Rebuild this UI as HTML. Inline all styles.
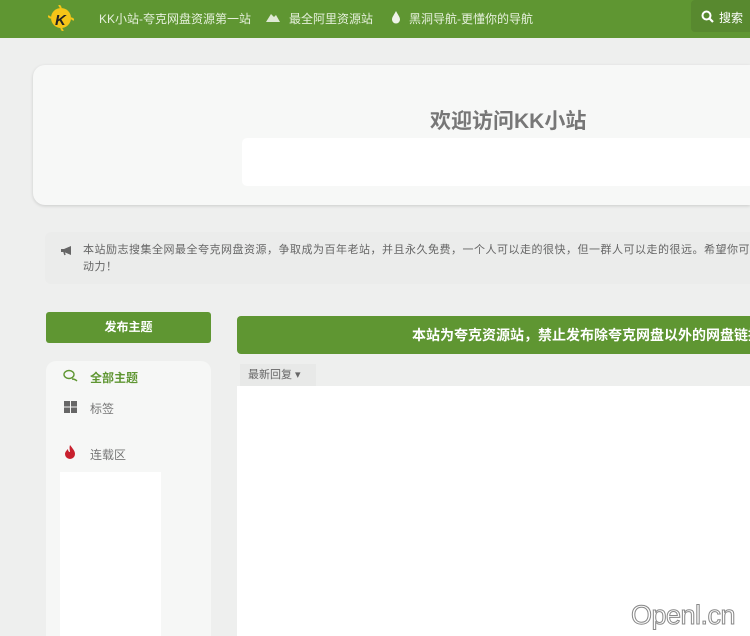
<!DOCTYPE html>
<html><head><meta charset="utf-8">
<style>
*{margin:0;padding:0;box-sizing:border-box}
html,body{width:750px;height:636px;overflow:hidden}
body{background:#eeefee;font-family:"Liberation Sans","Noto Sans CJK SC",sans-serif;position:relative}
.hdr{position:absolute;left:0;top:0;width:750px;height:38px;background:#5f9632;color:#e6f0dc;font-size:12px}
.hdr span{position:absolute;top:10px}
.srch{position:absolute;left:691px;top:0;width:59px;height:32px;background:#58892f;border-radius:4px 0 0 4px}
.card{position:absolute;left:33px;top:65px;width:717px;height:140px;background:#f7f8f7;border-radius:12px 0 0 12px;box-shadow:0 1px 3px rgba(0,0,0,.15)}
.card h1{position:absolute;left:397px;top:40px;font-size:21px;color:#777;font-weight:bold}
.card .in{position:absolute;left:209px;top:73px;width:508px;height:48px;background:#fff;border-radius:5px 0 0 5px}
.note{position:absolute;left:45px;top:232px;width:705px;height:52px;background:#ebeceb;border-radius:6px 0 0 6px;font-size:11px;color:#666;line-height:17px;padding:10px 0 0 38px;white-space:nowrap;overflow:hidden;letter-spacing:0.5px}
.btn{position:absolute;left:46px;top:312px;width:165px;height:31px;background:#5f9632;border-radius:3px;color:#fff;font-size:12px;font-weight:bold;text-align:center;line-height:31px}
.side{position:absolute;left:46px;top:361px;width:165px;height:275px;background:#f6f7f6;border-radius:10px 10px 0 0;overflow:hidden}
.side .it{position:absolute;left:44px;font-size:12px;color:#777}
.side .wh{position:absolute;left:14px;top:111px;width:101px;height:164px;background:#fff}
.ban{position:absolute;left:237px;top:316px;width:513px;height:38px;background:#5f9632;border-radius:4px 0 0 4px;color:#fff;font-size:14px;font-weight:bold;line-height:38px;padding-left:175px;white-space:nowrap;overflow:hidden}
.tab{position:absolute;left:240px;top:364px;width:76px;height:22px;background:#e8e9e8;font-size:11px;color:#666;line-height:22px;padding-left:8px}
.main{position:absolute;left:237px;top:386px;width:513px;height:250px;background:#fff}
.wm{position:absolute;left:631px;top:598px;font-size:27px;line-height:34px;color:#fff;-webkit-text-stroke:1px #888;font-family:"Liberation Sans",sans-serif;letter-spacing:-0.5px}
</style></head><body>
<div class="hdr">
<svg style="position:absolute;left:48px;top:5px" width="26" height="26" viewBox="0 0 26 26"><circle cx="13" cy="13" r="10" fill="#f5c518"/><path d="M3 13L0 11M23 13L26 15M13 3L11 0M13 23L15 26" stroke="#f5c518" stroke-width="2"/><text x="7" y="20" font-size="15" font-weight="bold" font-style="italic" fill="#222" font-family="Liberation Sans">K</text></svg>
<span style="left:99px">KK小站-夸克网盘资源第一站</span>
<svg style="position:absolute;left:265px;top:11px" width="16" height="12"><path d="M1 11L6 3L9 6L11 4L15 11Z" fill="#dfe9d4"/></svg>
<span style="left:289px">最全阿里资源站</span>
<svg style="position:absolute;left:391px;top:10px" width="10" height="14"><path d="M5 1C7 5 9 7 9 9.5A4 4 0 0 1 1 9.5C1 7 3 5 5 1Z" fill="#eef3e8"/></svg>
<span style="left:409px">黑洞导航-更懂你的导航</span>
<div class="srch"><svg style="position:absolute;left:10px;top:10px" width="13" height="13"><circle cx="5.5" cy="5.5" r="4" stroke="#fff" stroke-width="2" fill="none"/><path d="M8.5 8.5L12 12" stroke="#fff" stroke-width="2.2"/></svg><span style="left:28px;top:9px;color:#fff">搜索</span></div>
</div>
<div class="card"><h1>欢迎访问KK小站</h1><div class="in"></div></div>
<div class="note"><svg style="position:absolute;left:15px;top:13px" width="13" height="11"><path d="M1 4H4L11 1V10L4 7H1Z" fill="#666"/><path d="M4 7L5 10" stroke="#666" stroke-width="1.5"/></svg>本站励志搜集全网最全夸克网盘资源，争取成为百年老站，并且永久免费，一个人可以走的很快，但一群人可以走的很远。希望你可以与我们一起<br>动力！</div>
<div class="btn">发布主题</div>
<div class="side">
<svg style="position:absolute;left:17px;top:8px" width="15" height="13"><ellipse cx="6" cy="5.5" rx="5" ry="4" stroke="#5f9632" stroke-width="1.4" fill="none"/><path d="M9 10Q12 10 14 12" stroke="#5f9632" stroke-width="1.4" fill="none"/></svg>
<span class="it" style="top:8px;color:#5f9632;font-weight:bold">全部主题</span>
<svg style="position:absolute;left:18px;top:40px" width="13" height="12"><rect width="6" height="5.5" fill="#666"/><rect x="7" width="6" height="5.5" fill="#666"/><rect y="6.5" width="6" height="5.5" fill="#666"/><rect x="7" y="6.5" width="6" height="5.5" fill="#666"/></svg>
<span class="it" style="top:39px">标签</span>
<svg style="position:absolute;left:19px;top:84px" width="11" height="14"><path d="M5 0C8 4 10 6 10 9A5 5 0 0 1 0 9C0 7 2 5 3 4C3 6 4 7 5 7C5 5 4 3 5 0Z" fill="#c8202e"/></svg>
<span class="it" style="top:85px">连载区</span>
<div class="wh"></div>
</div>
<div class="ban">本站为夸克资源站，禁止发布除夸克网盘以外的网盘链接</div>
<div class="tab">最新回复 ▾</div>
<div class="main"></div>
<div class="wm">Openl.cn</div>
</body></html>
